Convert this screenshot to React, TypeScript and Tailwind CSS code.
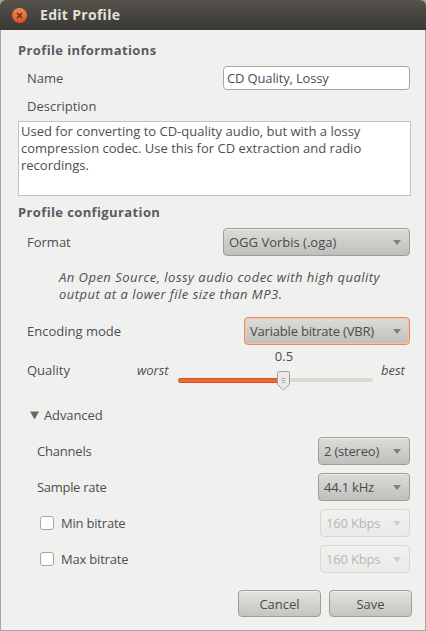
import type { ReactNode } from "react"

const comboBase =
  "flex items-center justify-between rounded-[4px] border h-[28px] text-[13px] bg-gradient-to-b"

function Arrow({ muted }: { muted?: boolean }) {
  return (
    <svg width="8" height="5" viewBox="0 0 8 5" className="shrink-0">
      <path d="M0 0H8L4 5Z" fill={muted ? "#cfccc9" : "#82807c"} />
    </svg>
  )
}

function Combo({ label, className, focused, disabled }: { label: string; className: string; focused?: boolean; disabled?: boolean }) {
  if (disabled) {
    return (
      <div className={`${comboBase} ${className} border-[#dad6d3] from-[#f1f1ef] to-[#ebeae9] text-[#b9b7b5] pl-[5px] pr-[8px]`}>
        <span>{label}</span>
        <Arrow muted />
      </div>
    )
  }
  return (
    <div
      className={`${comboBase} ${className} ${
        focused ? "border-[#e98a63] ring-1 ring-inset ring-[#f2c4ae]" : "border-[#a09c97]"
      } from-[#dcdcd8] to-[#bfbfbb] text-[#4c4a4c] pl-[5px] pr-[8px] shadow-[inset_0_1px_0_#ececea]`}
    >
      <span>{label}</span>
      <Arrow />
    </div>
  )
}

function Row({ label, className, children }: { label: ReactNode; className: string; children: ReactNode }) {
  return (
    <div className={`flex items-center justify-between ${className}`}>
      {label}
      {children}
    </div>
  )
}

function Check({ label }: { label: string }) {
  return (
    <label className="flex items-center gap-[7px] pl-[3px] tracking-[-0.2px]">
      <span className="w-[14px] h-[14px] rounded-[3px] border border-[#aaa5a1] bg-white" />
      <span>{label}</span>
    </label>
  )
}

function DialogButton({ label }: { label: string }) {
  return (
    <button className="w-[83px] h-[27px] rounded-[4px] border border-[#a09c97] bg-gradient-to-b from-[#e2e2de] to-[#c4c4c0] text-[13px] text-[#4c4a4c] shadow-[inset_0_1px_0_#f0f0ee]">
      {label}
    </button>
  )
}

export default function App() {
  return (
    <div className="w-[426px] h-[631px] bg-[#a8a4a0] font-['Open_Sans',sans-serif] text-[13px] leading-[18px] text-[#4f4d52] overflow-hidden">
      <header className="h-[30px] rounded-t-[6px] bg-gradient-to-b from-[#55534c] to-[#3a3833] flex items-center pl-[12px]">
        <span className="w-[15px] h-[15px] rounded-full bg-gradient-to-b from-[#f58a52] to-[#dd4e17] flex items-center justify-center">
          <svg width="7" height="7" viewBox="0 0 7 7">
            <path d="M1 1L6 6M6 1L1 6" stroke="#5a2a14" strokeWidth="1.2" />
          </svg>
        </span>
        <span className="ml-[13px] font-bold text-[14px] tracking-[0.3px] text-[#e4e1d8]">Edit Profile</span>
      </header>

      <main className="h-[600px] ml-px mr-px pl-[17px] pr-[14px] bg-[#f0f1ef] flex flex-col">
        <h2 className="mt-[11px] font-bold tracking-[0.38px] text-[#5c5a60]">Profile informations</h2>
        <Row label={<span className="ml-[9px]">Name</span>} className="mt-[7px] h-[24px]">
          <input
            readOnly
            value="CD Quality, Lossy"
            className="w-[187px] h-[24px] mr-px rounded-[4px] border border-[#aaa5a1] bg-white px-[3px] text-[13px] tracking-[-0.15px] text-[#4f4d52] outline-none"
          />
        </Row>
        <div className="ml-[9px] mt-[7px]">Description</div>
        <div className="mt-[6px] w-[393px] h-[75px] border border-[#c4c2bf] bg-white px-[2px] py-[1px] leading-[17px] text-[#4f4d52]">
          Used for converting to CD-quality audio, but with a lossy compression codec. Use this for CD extraction and radio recordings.
        </div>

        <h2 className="mt-[7px] font-bold tracking-[0.38px] text-[#5c5a60]">Profile configuration</h2>
        <Row label={<span className="ml-[9px]">Format</span>} className="mt-[7px]">
          <Combo label="OGG Vorbis (.oga)" className="w-[187px] mr-px" />
        </Row>
        <p className="mt-[13px] ml-[41px] italic leading-[17px] tracking-[0.47px]">
          An Open Source, lossy audio codec with high quality
          <br />
          output at a lower file size than MP3.
        </p>
        <Row label={<span className="ml-[9px]">Encoding mode</span>} className="mt-[14px]">
          <Combo label="Variable bitrate (VBR)" className="w-[166px] mr-px tracking-[-0.2px]" focused />
        </Row>

        <div className="mt-[2px] h-[18px] ml-[259px] w-[14px] flex justify-center whitespace-nowrap">0.5</div>
        {/* labels sit above the slider track, the value overlaps this row */}
        <div className="flex items-start h-[24px] -mt-[4px]">
          <span className="ml-[9px] w-[110px]">Quality</span>
          <span className="w-[41px] italic">worst</span>
          <div className="relative w-[195px] h-[24px]">
            <div className="absolute top-[17px] left-0 right-0 h-[5px] rounded-full bg-[#dbd7d4] border-b border-[#f6f5f4]" />
            <div className="absolute top-[17px] left-0 w-[105px] h-[5px] rounded-l-full bg-[#ea6a33] border-y border-[#d9551f]" />
            <svg width="13" height="20" viewBox="0 0 13 20" className="absolute left-[99px] top-[10px]">
              <path d="M0.5 2.5a2 2 0 0 1 2-2h8a2 2 0 0 1 2 2v11L6.5 19 0.5 13.5Z" fill="#eceae8" stroke="#a09c97" />
              <path d="M4.5 7.5H8.5M4.5 9.5H8.5M4.5 11.5H8.5" stroke="#b5b2ae" />
            </svg>
          </div>
          <span className="ml-[8px] italic">best</span>
        </div>

        <div className="flex items-center gap-[5px] mt-[21px] ml-[12px] tracking-[-0.1px]">
          <svg width="9" height="9" viewBox="0 0 9 9">
            <path d="M0 0.5H9L4.5 8.5Z" fill="#6b6966" />
          </svg>
          <span>Advanced</span>
        </div>

        <Row label={<span className="ml-[19px] tracking-[-0.2px]">Channels</span>} className="mt-[13px]">
          <Combo label="2 (stereo)" className="w-[92px] mr-px tracking-[-0.2px]" />
        </Row>
        <Row label={<span className="ml-[19px] tracking-[-0.3px]">Sample rate</span>} className="mt-[8px]">
          <Combo label="44.1 kHz" className="w-[92px] mr-px tracking-[-0.2px]" />
        </Row>
        <Row label={<span className="ml-[19px]"><Check label="Min bitrate" /></span>} className="mt-[8px]">
          <Combo label="160 Kbps" className="w-[90px] mr-px tracking-[-0.2px]" disabled />
        </Row>
        <Row label={<span className="ml-[19px]"><Check label="Max bitrate" /></span>} className="mt-[8px]">
          <Combo label="160 Kbps" className="w-[90px] mr-px tracking-[-0.2px]" disabled />
        </Row>

        <div className="mt-[17px] flex justify-end gap-[8px] -mr-px">
          <DialogButton label="Cancel" />
          <DialogButton label="Save" />
        </div>
      </main>
    </div>
  )
}
